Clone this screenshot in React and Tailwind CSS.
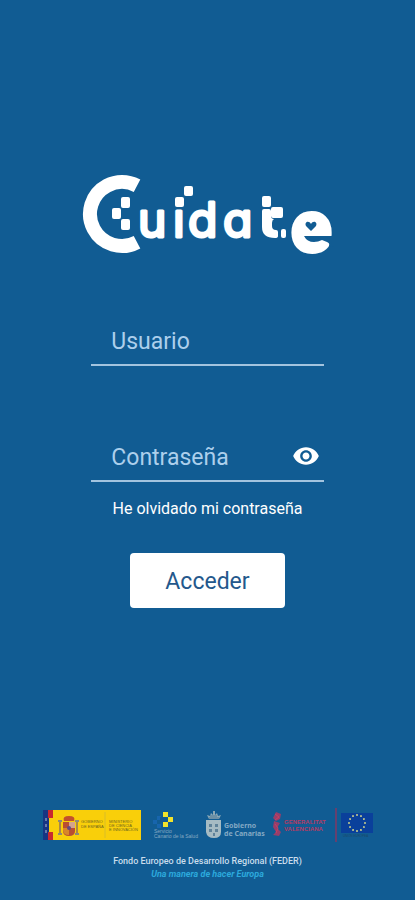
const Logo = () => (
    <svg viewBox="0 0 252 100" className="w-[252px]" role="img" aria-label="Cuídate" fill="white">
        <circle cx="40" cy="40" r="32" fill="none" stroke="white" strokeWidth="14" pathLength="360" strokeDasharray="236 124" transform="rotate(62 40 40)" />
        <rect x="39" y="23" width="9" height="11" rx="2" />
        <rect x="30" y="34" width="9" height="11" rx="2" />
        <rect x="39" y="45" width="9" height="11" rx="2" />

        <g fontFamily="Inter, sans-serif" fontWeight="400" fontSize="48" stroke="white" strokeWidth="3" strokeLinejoin="round">
            <text x="56" y="63">u</text>
            <text x="91" y="63">ı</text>
            <text x="106" y="63">d</text>
            <text x="141" y="63">ɑ</text>
        </g>
        <rect x="93" y="23" width="9" height="10" rx="2" />
        <rect x="102" y="12" width="9" height="10" rx="2" />

        <rect x="180" y="22" width="9" height="11" rx="2" />
        <rect x="189" y="33" width="12" height="11" rx="2" />
        <path d="M182 35h5q2 0 2 2v5q0 3 3 3-2 1-2 4v3q0 4 4 4 2 0 2 2v4q0 2-3 2-13 0-13-11V37q0-2 2-2z" />
        <rect x="199" y="55" width="5" height="9" rx="2" />

        <text x="211" y="75" fontFamily="Inter, sans-serif" fontWeight="700" fontSize="62" stroke="white" strokeWidth="8" strokeLinejoin="round">e</text>
        <ellipse cx="230" cy="54" rx="13" ry="10" />
        <path d="M222 62h28q2 0 2-2v13l-5-1q1-3-2-4l-5-2q-4 2-8 2-7 0-10-6z" fill="#115c93" />
        <path d="M229 57l-5-5c-2-4 3-6 5-2 2-4 7-2 5 2z" fill="#115c93" />
    </svg>
);

const SpainLogo = () => (
    <svg viewBox="0 0 98 30" className="w-[98px]" role="img" aria-label="Gobierno de España">
        <rect width="98" height="30" fill="#f9cf0a" />
        <rect width="6" height="30" fill="#183583" />
        <rect x="5" width="5" height="8" fill="#c82930" />
        <rect x="5" y="22" width="5" height="8" fill="#c82930" />
        <path d="M3 8v3M3 14v3M3 20v3" stroke="#b9bfd3" strokeWidth="1" />
        <path d="M17 12v11M34 12v11" stroke="#a88748" strokeWidth="2" />
        <path d="M15 24h4M32 24h4M15 11h4M32 11h4" stroke="#8e8a77" strokeWidth="2" />
        <path d="M20 12h12v9q0 5-6 5t-6-5z" fill="#b94f31" />
        <path d="M26 12h6v6h-6z" fill="#d3a38d" />
        <path d="M20 18h6v7q-6 0-6-5z" fill="#d98728" />
        <path d="M21 11q-2-5 5-5t5 5z" fill="#c2512d" />
        <circle cx="26" cy="18" r="2" fill="#634b84" />
        <g fill="#6b6421" fontFamily='"Liberation Sans", sans-serif' fontSize="4">
            <text x="38" y="13">GOBIERNO</text>
            <text x="38" y="18">DE ESPAÑA</text>
            <text x="66" y="13">MINISTERIO</text>
            <text x="66" y="17">DE CIENCIA</text>
            <text x="66" y="21">E INNOVACIÓN</text>
        </g>
        <path d="M62 2v26" stroke="#d8bd29" strokeWidth="1" />
    </svg>
);

const HealthLogo = () => (
    <svg viewBox="0 0 48 30" className="w-12" role="img" aria-label="Servicio Canario de la Salud">
        <path d="M4 6h4v4H4zM0 10h4v4H0zM4 14h4v4H4z" fill="#1765ad" />
        <path d="M10 2h5v5h-5zM15 7h5v5h-5zM10 12h5v5h-5z" fill="#f2e32c" />
        <path d="M7 7h4v5H7z" fill="#155791" />
        <g fill="#86a9c2" fontFamily='"Liberation Sans", sans-serif' fontSize="5">
            <text x="1" y="23">Servicio</text>
            <text x="1" y="28">Canario de la Salud</text>
        </g>
    </svg>
);

const CanaryLogo = () => (
    <svg viewBox="0 0 64 30" className="w-16" role="img" aria-label="Gobierno de Canarias">
        <path d="M4 9L2 5l3 1 1-3 2 2V1h2v4l2-2 1 3 3-1-2 4z" fill="#8ba8b6" />
        <path d="M1 10h15v12q0 6-7 6t-8-6z" fill="#a6bbc3" />
        <path d="M4 14h3v3H4zM10 14h3v3h-3zM4 19h3v3H4zM10 19h3v3h-3zM8 23h2v3H8z" fill="#5f8299" />
        <path d="M5 6h7M4 8h10" stroke="#4d7895" strokeWidth="1" />
        <g fill="#83a9c4" fontFamily='"Noto Sans", sans-serif' fontSize="7" fontWeight="700">
            <text x="19" y="18">Gobierno</text>
            <text x="19" y="26">de Canarias</text>
        </g>
    </svg>
);

const ValenciaLogo = () => (
    <svg viewBox="0 0 60 30" className="w-[60px]" role="img" aria-label="Generalitat Valenciana">
        <path d="M5 2l5 2-1 5-4 2-3-3zM3 11l6 2-3 5 4 4-2 4-6-1 3-3-3-5z" fill="#983e6b" />
        <path d="M4 4l4 3-4 3M4 14l3 4-2 5" fill="none" stroke="#ca3e60" strokeWidth="1" />
        <g fill="#b43b65" fontFamily='"Liberation Sans", sans-serif' fontSize="6" fontWeight="700">
            <text x="13" y="14">GENERALITAT</text>
            <text x="13" y="21">VALENCIANA</text>
        </g>
    </svg>
);

const starAngles = [0, 30, 60, 90, 120, 150, 180, 210, 240, 270, 300, 330];

const EuropeLogo = () => (
    <svg viewBox="0 0 32 30" className="w-8" role="img" aria-label="Unión Europea">
        <rect y="3" width="32" height="20" fill="#0a409b" />
        {starAngles.map((angle) => (
            <circle key={angle} cx="16" cy="5" r="1" fill="#c9ce8b" transform={`rotate(${angle} 16 13)`} />
        ))}
        <text x="2" y="27" fill="#1b4868" fontFamily='"Liberation Sans", sans-serif' fontSize="3">UNIÓN EUROPEA</text>
    </svg>
);

const EyeIcon = () => (
    <svg viewBox="0 0 24 24" className="size-7" fill="white" aria-hidden="true">
        <path d="M12 4.5C7 4.5 2.73 7.61 1 12c1.73 4.39 6 7.5 11 7.5s9.27-3.11 11-7.5c-1.73-4.39-6-7.5-11-7.5zM12 17c-2.76 0-5-2.24-5-5s2.24-5 5-5 5 2.24 5 5-2.24 5-5 5zm0-8c-1.66 0-3 1.34-3 3s1.34 3 3 3 3-1.34 3-3-1.34-3-3-3z" />
    </svg>
);

const fieldClass = 'w-full min-w-0 bg-transparent pl-5 text-[23px] leading-8 text-white outline-none placeholder:text-[#accfec]';

const App = () => {
    return (
        <div className="flex min-h-screen flex-col items-center bg-[#115c93] pt-[174px] font-[Roboto,sans-serif] text-white">
            <Logo />

            <form className="mt-[52px] flex w-[56%] flex-col items-center" onSubmit={(e) => e.preventDefault()}>
                <div className="flex h-10 w-full items-start border-b-2 border-[#a3c4df]">
                    <input type="text" aria-label="Usuario" placeholder="Usuario" className={fieldClass} />
                </div>
                <div className="mt-[76px] flex h-10 w-full items-start border-b-2 border-[#a3c4df]">
                    <input type="password" aria-label="Contraseña" placeholder="Contraseña" className={fieldClass} />
                    <button type="button" aria-label="Mostrar contraseña" className="mr-1 shrink-0">
                        <EyeIcon />
                    </button>
                </div>
                <a href="#" className="mt-[15px] whitespace-nowrap text-base leading-6">He olvidado mi contraseña</a>
                <button type="submit" className="mt-8 h-[55px] w-2/3 rounded bg-white pt-1 text-[23px] text-[#24588c]">Acceder</button>
            </form>

            <footer className="mt-auto flex w-full flex-col items-center pb-5">
                <div className="flex items-center">
                    <SpainLogo />
                    <div className="ml-3"><HealthLogo /></div>
                    <div className="ml-1"><CanaryLogo /></div>
                    <div className="ml-0.5"><ValenciaLogo /></div>
                    <div className="mx-1 h-[34px] w-0.5 bg-[#65406f]" />
                    <EuropeLogo />
                </div>
                <p className="mt-3 text-[9px] font-medium leading-[14px] text-[#c9dcec]">Fondo Europeo de Desarrollo Regional (FEDER)</p>
                <p className="text-[9px] font-bold italic leading-3 text-[#2ca9dc]">Una manera de hacer Europa</p>
            </footer>
        </div>
    );
};

export default App;
